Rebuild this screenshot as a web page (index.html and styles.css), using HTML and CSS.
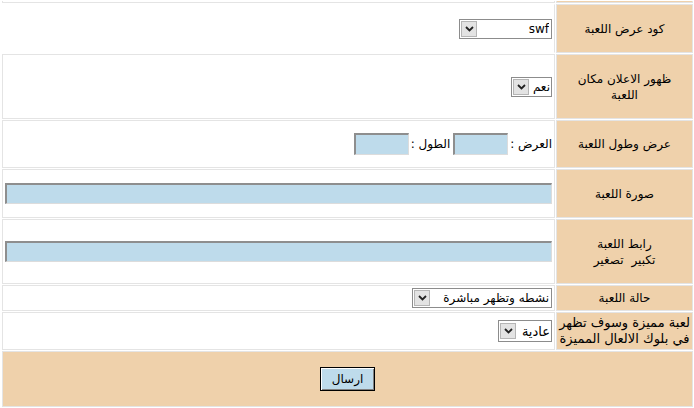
FILE: index.html
```html
<!DOCTYPE html>
<html lang="ar" dir="rtl">
<head>
<meta charset="utf-8">
<title>اضافة لعبة</title>
<link rel="stylesheet" href="styles.css">
</head>
<body>
<table class="form">
  <tr class="r0"><td class="lbl"></td><td class="fld"></td></tr>
  <tr class="r1">
    <td class="lbl">كود عرض اللعبة</td>
    <td class="fld">
      <span class="sel w-code"><select><option>swf</option></select><span class="arr"><svg width="9" height="6" viewBox="0 0 9 6"><path d="M1 1 L4.5 4.5 L8 1" fill="none" stroke="#222" stroke-width="1.8"/></svg></span></span>
    </td>
  </tr>
  <tr class="r2">
    <td class="lbl">ظهور الاعلان مكان<br>اللعبة</td>
    <td class="fld">
      <span class="sel w-ads"><select class="tight"><option>نعم</option><option>لا</option></select><span class="arr"><svg width="9" height="6" viewBox="0 0 9 6"><path d="M1 1 L4.5 4.5 L8 1" fill="none" stroke="#222" stroke-width="1.8"/></svg></span></span>
    </td>
  </tr>
  <tr class="r3">
    <td class="lbl">عرض وطول اللعبة</td>
    <td class="fld">
      <span class="pair">العرض :</span><input class="txt small" type="text"><span class="pair gap">الطول :</span><input class="txt small" type="text">
    </td>
  </tr>
  <tr class="r4">
    <td class="lbl">صورة اللعبة</td>
    <td class="fld"><input class="txt long" type="text"></td>
  </tr>
  <tr class="r5">
    <td class="lbl">رابط اللعبة<br><span class="zoom">تكبير</span><span class="zoom">تصغير</span></td>
    <td class="fld"><input class="txt long" type="text"></td>
  </tr>
  <tr class="r6">
    <td class="lbl">حالة اللعبة</td>
    <td class="fld">
      <span class="sel w-state"><select><option>نشطه وتظهر مباشرة</option></select><span class="arr"><svg width="9" height="6" viewBox="0 0 9 6"><path d="M1 1 L4.5 4.5 L8 1" fill="none" stroke="#222" stroke-width="1.8"/></svg></span></span>
    </td>
  </tr>
  <tr class="r7">
    <td class="lbl big">لعبة مميزة وسوف تظهر في بلوك الالعال المميزة</td>
    <td class="fld">
      <span class="sel w-type"><select class="big tight"><option>عادية</option></select><span class="arr"><svg width="9" height="6" viewBox="0 0 9 6"><path d="M1 1 L4.5 4.5 L8 1" fill="none" stroke="#222" stroke-width="1.8"/></svg></span></span>
    </td>
  </tr>
  <tr class="r8">
    <td class="lbl submit" colspan="2"><button class="btn" type="submit">ارسال</button></td>
  </tr>
</table>
</body>
</html>
```
FILE: styles.css
```css
html, body {
  margin: 0;
  padding: 0;
  background: #ffffff;
}
body {
  font-family: "DejaVu Sans", "Noto Sans", sans-serif;
  font-size: 12px;
  color: #000;
}
.form {
  width: 693px;
  border-collapse: separate;
  border-spacing: 1px;
  direction: rtl;
}
.form td {
  box-sizing: border-box;
  border: 1px solid #e4e4e4;
  padding: 0 1px;
  vertical-align: middle;
}
.lbl {
  width: 137px;
  background: #efd1ab;
  text-align: center;
  line-height: 16px;
}
.lbl.big {
  font-size: 13px;
  line-height: 16px;
  padding: 0;
}
.fld {
  background: #fff;
  text-align: right;
  white-space: nowrap;
}
.r0 td { height: 2px; border-top: 0; }
.r1 td { height: 49px; }
.r1 .fld { border-color: #fff #e4e4e4 #fff #fff; }
.r2 td { height: 65px; }
.r3 td { height: 48px; }
.r4 td { height: 49px; }
.r5 td { height: 65px; }
.r6 td { height: 26px; }
.r7 td { height: 38px; }
.r8 td { height: 56px; }

.sel {
  display: inline-flex;
  align-items: center;
  box-sizing: border-box;
  height: 20px;
  border: 1px solid #8c8c8c;
  background: #fff;
  vertical-align: middle;
  margin-right: 1px;
}
.sel select {
  appearance: none;
  -webkit-appearance: none;
  border: 0;
  outline: 0;
  background: transparent;
  font-family: "DejaVu Sans", sans-serif;
  font-size: 12px;
  color: #000;
  padding: 0 2px;
  margin: 0;
  height: 18px;
  flex: 1;
  min-width: 0;
  direction: rtl;
  text-align: right;
}
.sel select.tight { padding: 0 1px 0 0; }
.sel select.big { font-size: 13px; }
.arr {
  box-sizing: border-box;
  width: 16px;
  height: 16px;
  margin: 0 1px;
  border: 1px solid #b5b5b5;
  background: #e3e3e3;
  display: flex;
  align-items: center;
  justify-content: center;
  flex: none;
}
.w-code { width: 93px; }
.w-ads { width: 41px; }
.w-state { width: 140px; }
.w-type { width: 54px; height: 22px; }

.pair {
  vertical-align: middle;
  margin: 0 1px 0 2px;
}
.pair.gap { margin-right: 3px; }
.txt {
  box-sizing: border-box;
  background: #bedbeb;
  border-top: 2px solid #8e8e8e;
  border-right: 1px solid #dcdcdc;
  border-bottom: 1px solid #dcdcdc;
  border-left: 2px solid #8e8e8e;
  padding: 0 2px;
  margin: 0;
  vertical-align: middle;
  font-family: "DejaVu Sans", sans-serif;
  font-size: 12px;
}
.txt.small { width: 55px; height: 22px; }
.txt.long { width: 547px; height: 21px; margin-right: 1px; }

.zoom { margin: 0 4px; }

.submit { text-align: center; }
.btn {
  box-sizing: border-box;
  width: 55px;
  height: 24px;
  border: 1px solid #000;
  box-shadow: inset 1px 1px #ffffff, inset -1px -1px #808080;
  background: #bedbeb;
  font-family: "DejaVu Sans", sans-serif;
  font-size: 12px;
  color: #000;
  padding: 0;
  vertical-align: middle;
}
```
